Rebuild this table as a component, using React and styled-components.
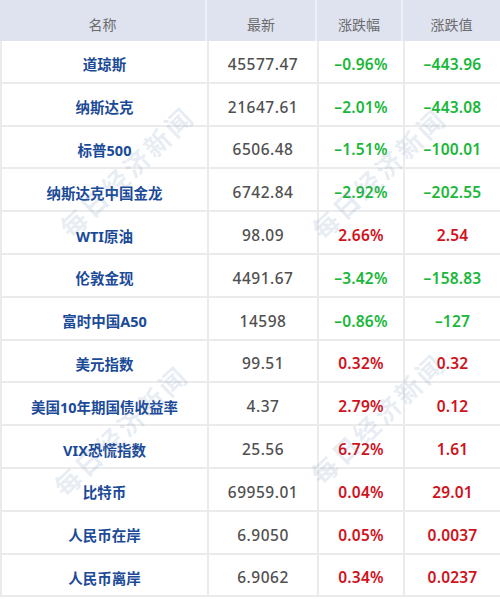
import styled, { createGlobalStyle } from 'styled-components';

const rows = [
  { name: '道琼斯', last: '45577.47', pct: '-0.96%', chg: '-443.96' },
  { name: '纳斯达克', last: '21647.61', pct: '-2.01%', chg: '-443.08' },
  { name: '标普500', last: '6506.48', pct: '-1.51%', chg: '-100.01' },
  { name: '纳斯达克中国金龙', last: '6742.84', pct: '-2.92%', chg: '-202.55' },
  { name: 'WTI原油', last: '98.09', pct: '2.66%', chg: '2.54' },
  { name: '伦敦金现', last: '4491.67', pct: '-3.42%', chg: '-158.83' },
  { name: '富时中国A50', last: '14598', pct: '-0.86%', chg: '-127' },
  { name: '美元指数', last: '99.51', pct: '0.32%', chg: '0.32' },
  { name: '美国10年期国债收益率', last: '4.37', pct: '2.79%', chg: '0.12' },
  { name: 'VIX恐慌指数', last: '25.56', pct: '6.72%', chg: '1.61' },
  { name: '比特币', last: '69959.01', pct: '0.04%', chg: '29.01' },
  { name: '人民币在岸', last: '6.9050', pct: '0.05%', chg: '0.0037' },
  { name: '人民币离岸', last: '6.9062', pct: '0.34%', chg: '0.0237' },
];

const marks = [
  { x: 126, y: 171 },
  { x: 378, y: 173 },
  { x: 120, y: 430 },
  { x: 377, y: 418 },
];

// the source uses a typographic minus, narrower than the hyphen's look
const fmt = (v) => v.replace('-', '\u2013');

function App() {
  return (
    <>
      <GlobalStyle />
      <Page>
        <Header>
          <HeadCell>名称</HeadCell>
          <HeadCell>最新</HeadCell>
          <HeadCell>涨跌幅</HeadCell>
          <HeadCell>涨跌值</HeadCell>
        </Header>
        {rows.map((row) => {
          const down = row.pct.startsWith('-');
          return (
            <Row key={row.name}>
              <NameCell>{row.name}</NameCell>
              <NumCell>{row.last}</NumCell>
              <ChangeCell $down={down}>{fmt(row.pct)}</ChangeCell>
              <ChangeCell $down={down}>{fmt(row.chg)}</ChangeCell>
            </Row>
          );
        })}
        <Overlay>
          {marks.map((m) => (
            <Mark key={`${m.x}-${m.y}`} $x={m.x} $y={m.y}>
              每日经济新闻
            </Mark>
          ))}
        </Overlay>
      </Page>
    </>
  );
}

const GlobalStyle = createGlobalStyle`
  body {
    margin: 0;
    background: #fff;
    font-family: "Noto Sans", "Noto Sans CJK SC", sans-serif;
  }
`;

const Page = styled.div`
  position: relative;
  width: 500px;
  overflow: hidden;
`;

const columns = '207px 110px 86px 97px';

const Header = styled.div`
  display: grid;
  grid-template-columns: ${columns};
  height: 41px;
  background: #dfe3f0;
`;

const HeadCell = styled.div`
  display: flex;
  align-items: center;
  justify-content: center;
  padding-top: 6px;
  box-sizing: border-box;
  border-right: 2px solid #eef0f7;
  color: #6b6b6b;
  font-size: 14px;
  &:last-child {
    border-right: none;
  }
`;

const Row = styled.div`
  display: grid;
  grid-template-columns: ${columns};
  height: 42.8px;
  box-sizing: border-box;
  border-left: 2px solid #ebebeb;
  border-bottom: 2px solid #ebebeb;
`;

const Cell = styled.div`
  display: flex;
  align-items: center;
  justify-content: center;
  padding-top: 5px;
  box-sizing: border-box;
  border-right: 2px solid #ebebeb;
  font-size: 15.5px;
  letter-spacing: 0.5px;
  white-space: nowrap;
`;

const NameCell = styled(Cell)`
  color: #1b4a98;
  font-weight: 700;
  font-size: 14.5px;
  letter-spacing: 0;
`;

const NumCell = styled(Cell)`
  color: #505050;
  font-weight: 500;
`;

const ChangeCell = styled(Cell)`
  color: ${(p) => (p.$down ? '#1ab73a' : '#d0121c')};
  font-weight: 600;
  letter-spacing: 0.2px;
`;

const Overlay = styled.div`
  position: absolute;
  inset: 0;
  pointer-events: none;
`;

const Mark = styled.span`
  position: absolute;
  left: ${(p) => p.$x}px;
  top: ${(p) => p.$y}px;
  transform: translate(-50%, -50%) rotate(-44deg);
  font-family: "Noto Sans CJK SC", sans-serif;
  font-size: 26px;
  font-weight: 700;
  letter-spacing: 3px;
  white-space: nowrap;
  color: rgba(110, 140, 185, 0.16);
`;

export default App;
